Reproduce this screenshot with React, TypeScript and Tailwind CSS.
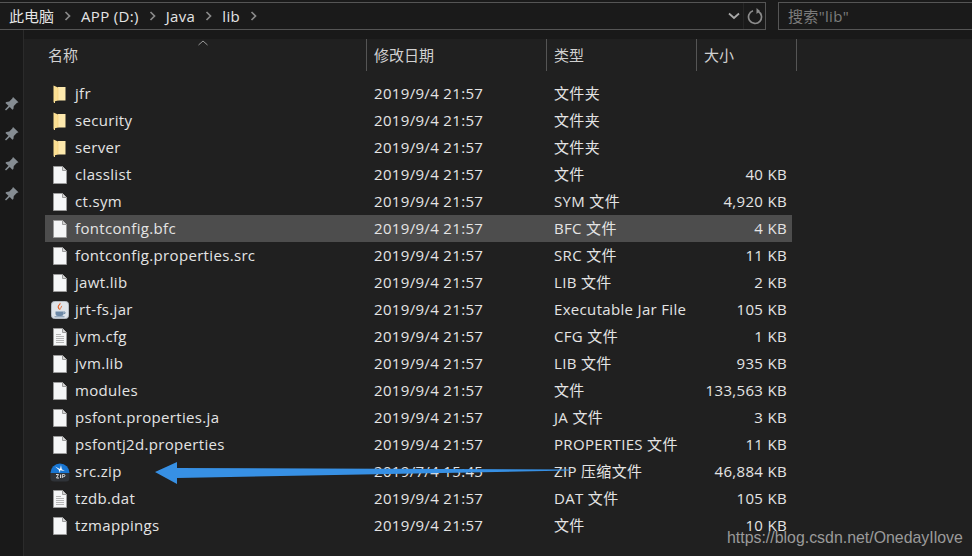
import React from 'react';

const uiFont = { fontFamily: '"Open Sans", "Noto Sans CJK SC", sans-serif' };

type Kind = 'folder' | 'blank' | 'text' | 'jar' | 'zip';

interface Entry {
  name: string;
  date: string;
  type: string;
  size: string;
  kind: Kind;
}

const d = '2019/9/4 21:57';

const entries: Entry[] = [
  { name: 'jfr', date: d, type: '文件夹', size: '', kind: 'folder' },
  { name: 'security', date: d, type: '文件夹', size: '', kind: 'folder' },
  { name: 'server', date: d, type: '文件夹', size: '', kind: 'folder' },
  { name: 'classlist', date: d, type: '文件', size: '40 KB', kind: 'blank' },
  { name: 'ct.sym', date: d, type: 'SYM 文件', size: '4,920 KB', kind: 'blank' },
  { name: 'fontconfig.bfc', date: d, type: 'BFC 文件', size: '4 KB', kind: 'blank' },
  { name: 'fontconfig.properties.src', date: d, type: 'SRC 文件', size: '11 KB', kind: 'blank' },
  { name: 'jawt.lib', date: d, type: 'LIB 文件', size: '2 KB', kind: 'blank' },
  { name: 'jrt-fs.jar', date: d, type: 'Executable Jar File', size: '105 KB', kind: 'jar' },
  { name: 'jvm.cfg', date: d, type: 'CFG 文件', size: '1 KB', kind: 'text' },
  { name: 'jvm.lib', date: d, type: 'LIB 文件', size: '935 KB', kind: 'blank' },
  { name: 'modules', date: d, type: '文件', size: '133,563 KB', kind: 'blank' },
  { name: 'psfont.properties.ja', date: d, type: 'JA 文件', size: '3 KB', kind: 'blank' },
  { name: 'psfontj2d.properties', date: d, type: 'PROPERTIES 文件', size: '11 KB', kind: 'blank' },
  { name: 'src.zip', date: '2019/7/4 15:45', type: 'ZIP 压缩文件', size: '46,884 KB', kind: 'zip' },
  { name: 'tzdb.dat', date: d, type: 'DAT 文件', size: '105 KB', kind: 'text' },
  { name: 'tzmappings', date: d, type: '文件', size: '10 KB', kind: 'blank' },
];

const FileIcon = ({ kind }: { kind: Kind }) => {
  if (kind === 'folder') {
    return (
      <svg width="18" height="18" viewBox="0 0 18 18">
        <path d="M7 2h7.500v13.500H7z" fill="#fde9ad" />
        <path d="M2.500 0.500L7 2.500v13l-3 .7V18H3l-.5-1.500z" fill="#fbdf92" />
        <path d="M7 2.500v13" stroke="#f3cf78" strokeWidth="0.6" />
      </svg>
    );
  }
  if (kind === 'jar') {
    return (
      <svg width="18" height="18" viewBox="0 0 18 18">
        <rect x="0.5" y="0.500" width="17" height="17" rx="3" fill="#dfe4ea" stroke="#b4bac2" />
        <path d="M9 1.500c2 2-2 3-1 5 .4.8 1 1.200 1 2.500-1.200-.6-2.800-1.800-2.300-3.800C7 3.800 9 3 9 1.500z" fill="#e2632a" />
        <path d="M11.200 4.500c0 1.500-1.700 2.200-1.200 4.500-1.100-1.200-.8-3.400 1.200-4.500z" fill="#e2632a" />
        <path d="M4.500 10.500h8v2a2.500 2.500 0 0 1-2.500 2.500H7a2.500 2.500 0 0 1-2.500-2.500z" fill="#6c88a6" />
        <path d="M12.500 11h1.500v1.500h-1.500M3.500 15.800h10" stroke="#6c88a6" strokeWidth="0.9" fill="none" />
      </svg>
    );
  }
  if (kind === 'zip') {
    return (
      <svg width="20" height="20" viewBox="0 0 20 20">
        <path d="M.5 11a9.500 9.500 0 0 1 19 0z" fill="#1976d2" />
        <path d="M.5 11h19v5a3.500 3.500 0 0 1-3.500 3.500H4A3.500 3.500 0 0 1 .5 16z" fill="#2f3338" />
        <path d="M5 4.500l5 2.500 1-4 .8 4.300 3 1.700-4.600-.7-.2 2.700-1.300-3.200z" fill="#ffffff" />
        <path d="M6 12.500h2.500l-2 3.500h2.500M10.500 12.500v3.500M12.300 16v-3.500h1.500a1 1 0 0 1 0 2.200h-1.500" stroke="#d8d8d8" strokeWidth="1" fill="none" />
      </svg>
    );
  }
  return (
    <svg width="16" height="18" viewBox="0 0 16 18">
      <path d="M1.500 .5h9l4 4v13h-13z" fill="#f5f6f7" stroke="#9a9a9a" />
      <path d="M10.500 .5v4h4" fill="#d4d4d4" stroke="#9a9a9a" />
      {kind === 'text' && (
        <path d="M4 6.500h5M4 8.500h8M4 10.500h8M4 12.500h8M4 14.500h8" stroke="#b5b5b5" strokeWidth="1" />
      )}
    </svg>
  );
};

const Pin = () => (
  <svg width="16" height="16" viewBox="0 0 16 16">
    <path d="M10 1l5.500 5.200-1.700.7-3 3-.4 3.100-1 .8-2.600-2.900-3.800 3.600-1-.9 3.500-3.800L2.400 7l.9-1 3-.4 3-3z" fill="#858c92" />
  </svg>
);

const Chevron = () => (
  <svg width="7" height="12" viewBox="0 0 7 12" className="mx-[10px]">
    <path d="M1.500 2l4 4-4 4" stroke="#8a8a8a" strokeWidth="1.700" fill="none" />
  </svg>
);

const App = () => {
  return (
    <div className="relative w-[972px] h-[556px] overflow-hidden bg-[#191919] text-[15px] tracking-[0.33px] text-[#e4e4e4]" style={uiFont}>
      {/* address bar */}
      <div className="flex h-[30px] pt-[2px] bg-[#1a1a1a]">
        <div className="flex items-center w-[766px] pl-[9px] border-y border-r border-[#555555]">
          <span className="tracking-normal">此电脑</span>
          <Chevron />
          <span>APP (D:)</span>
          <Chevron />
          <span>Java</span>
          <Chevron />
          <span>lib</span>
          <Chevron />
          <svg width="12" height="8" viewBox="0 0 12 8" className="ml-auto mr-[3px]">
            <path d="M1 1.500l5 4.500 5-4.500" stroke="#a8a8a8" strokeWidth="1.800" fill="none" />
          </svg>
          <div className="flex items-center justify-center w-[22px] h-full border-l border-[#262626]">
            <svg width="16" height="17" viewBox="0 0 16 17">
              <path d="M11 3.200a6.500 6.500 0 1 1-5 -.4" stroke="#8c8c8c" strokeWidth="1.700" fill="none" />
              <path d="M9.500 0v6l3.500-3z" fill="#8c8c8c" />
            </svg>
          </div>
        </div>
        <div className="ml-[12px] flex-1 flex items-center pl-[9px] border-y border-l border-[#555555] text-[#7c7c7c]">
          搜索"lib"
        </div>
      </div>

      <div className="flex h-[526px]">
        {/* quick access rail */}
        <div className="w-[24px] shrink-0 border-r border-[#2b2b2b] flex flex-col items-center gap-[14px] pt-[66px] pr-[1px]">
          <Pin />
          <Pin />
          <Pin />
          <Pin />
        </div>

        {/* file list */}
        <div className="flex-1 mt-[9px] bg-[#202020] pl-[21px]">
          <div className="relative grid grid-cols-[321px_180px_150px_101px] h-[32px] text-[#d0d0d0] tracking-normal">
            <div className="pl-[3px] flex items-center">名称</div>
            <div className="border-l border-[#555555] pl-[7px] flex items-center">修改日期</div>
            <div className="border-l border-[#555555] pl-[7px] flex items-center">类型</div>
            <div className="border-x border-[#555555] pl-[7px] flex items-center">大小</div>
            <svg width="10" height="6" viewBox="0 0 10 6" className="absolute left-[153px] top-[1px]">
              <path d="M.5 5L5 1l4.500 4" stroke="#9a9a9a" strokeWidth="1" fill="none" />
            </svg>
          </div>
          <div className="mt-[9px]">
            {entries.map((entry) => (
              <div
                key={entry.name}
                className={`grid grid-cols-[321px_180px_150px_96px] h-[27px] items-center w-[747px] ${entry.name === 'fontconfig.bfc' ? 'bg-[#4d4d4d]' : ''}`}
              >
                <div className="flex items-center">
                  <div className="w-[30px] flex justify-center shrink-0 pr-[1px]">
                    <FileIcon kind={entry.kind} />
                  </div>
                  <span>{entry.name}</span>
                </div>
                <div className="pl-[8px]">{entry.date}</div>
                <div className="pl-[8px] whitespace-nowrap">{entry.type}</div>
                <div className="pr-[5px] text-right whitespace-nowrap">{entry.size}</div>
              </div>
            ))}
          </div>
        </div>
      </div>

      {/* annotation arrow */}
      <svg width="972" height="556" viewBox="0 0 972 556" className="absolute inset-0 pointer-events-none">
        <path d="M155 472L177 462V468L570 469.500V470.500L177 478V484z" fill="#3790e4" />
      </svg>

      {/* watermark */}
      <div className="absolute left-[727px] top-[526px] text-[15.900px] tracking-normal text-[#9a9a9a] whitespace-nowrap" style={{ fontFamily: '"Liberation Sans", sans-serif' }}>
        https://blog.csdn.net/OnedayIlove
      </div>
    </div>
  );
};

export default App;
